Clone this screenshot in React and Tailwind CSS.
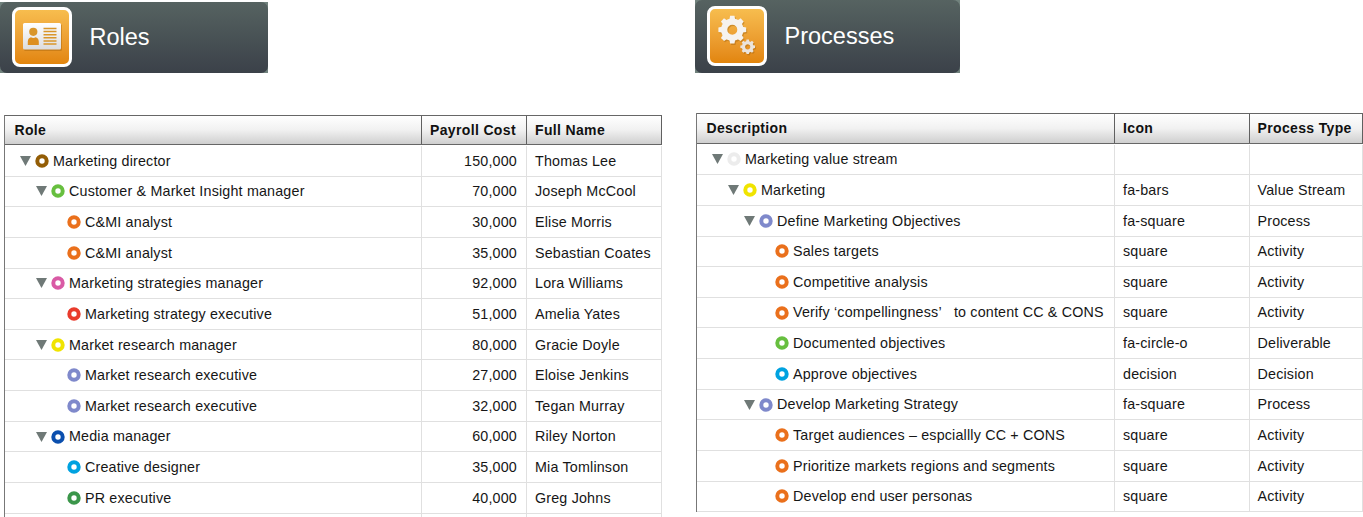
const roles = [
  [0, true, "#935d06", "Marketing director", "150,000", "Thomas Lee"],
  [1, true, "#67bf3f", "Customer & Market Insight manager", "70,000", "Joseph McCool"],
  [2, false, "#ea701c", "C&MI analyst", "30,000", "Elise Morris"],
  [2, false, "#ea701c", "C&MI analyst", "35,000", "Sebastian Coates"],
  [1, true, "#d95aa5", "Marketing strategies manager", "92,000", "Lora Williams"],
  [2, false, "#e93b2c", "Marketing strategy executive", "51,000", "Amelia Yates"],
  [1, true, "#f0e400", "Market research manager", "80,000", "Gracie Doyle"],
  [2, false, "#7f89cb", "Market research executive", "27,000", "Eloise Jenkins"],
  [2, false, "#7f89cb", "Market research executive", "32,000", "Tegan Murray"],
  [1, true, "#0b4fae", "Media manager", "60,000", "Riley Norton"],
  [2, false, "#00a2e0", "Creative designer", "35,000", "Mia Tomlinson"],
  [2, false, "#3b964a", "PR executive", "40,000", "Greg Johns"],
];

const verifyLabel = (
  <>
    Verify ‘compellingness<span className="tracking-[4px]">’</span>
    {"  to content CC & CONS"}
  </>
);

const processes = [
  [0, true, "#ececec", "Marketing value stream", "", ""],
  [1, true, "#f0e400", "Marketing", "fa-bars", "Value Stream"],
  [2, true, "#7f89cb", "Define Marketing Objectives", "fa-square", "Process"],
  [3, false, "#ea701c", "Sales targets", "square", "Activity"],
  [3, false, "#ea701c", "Competitive analysis", "square", "Activity"],
  [3, false, "#ea701c", verifyLabel, "square", "Activity"],
  [3, false, "#67bf3f", "Documented objectives", "fa-circle-o", "Deliverable"],
  [3, false, "#00a2e0", "Approve objectives", "decision", "Decision"],
  [2, true, "#7f89cb", "Develop Marketing Strategy", "fa-square", "Process"],
  [3, false, "#ea701c", "Target audiences – espciallly CC + CONS", "square", "Activity"],
  [3, false, "#ea701c", "Prioritize markets regions and segments", "square", "Activity"],
  [3, false, "#ea701c", "Develop end user personas", "square", "Activity"],
];

function RolesIcon() {
  return (
    <svg className="size-full" viewBox="0 0 60 60">
      <defs>
        <linearGradient id="card" x1="0" y1="0" x2="0" y2="1">
          <stop offset="0" stopColor="#ffffff" />
          <stop offset="1" stopColor="#dcdcdc" />
        </linearGradient>
      </defs>
      <rect x="12" y="17" width="38" height="27" rx="1.5" fill="#a9670c" opacity=".45" />
      <rect x="11" y="16" width="38" height="26.5" rx="1.5" fill="url(#card)" />
      <circle cx="21.3" cy="24.8" r="4.1" fill="#d9962a" />
      <path d="M15.800 38v-3.400c0-2.600 1.700-4 3.200-4.300 1.300 1 3.300 1 4.600 0 1.500.3 3.200 1.700 3.200 4.300V38z" fill="#dd8f1f" />
      <path d="M31.500 21.500h13M31.500 24.600h13M31.500 27.700h13M31.500 30.800h13M31.500 33.900h13M31.500 37h13" stroke="#d9962a" strokeWidth="1.500" />
    </svg>
  );
}

function Gear({ cx, cy, r, hole, tooth, fill }) {
  return (
    <g transform={`translate(${cx} ${cy})`} fill="none">
      <circle r={(r + hole) / 2} stroke={fill} strokeWidth={r - hole} />
      {[0, 45, 90, 135, 180, 225, 270, 315].map((a) => (
        <path
          key={a}
          transform={`rotate(${a})`}
          d={`M${-tooth} ${-r + 1}L${-tooth * 0.75} ${-r * 1.24}H${tooth * 0.75}L${tooth} ${-r + 1}z`}
          fill={fill}
        />
      ))}
    </g>
  );
}

function ProcessIcon() {
  return (
    <svg className="size-full" viewBox="0 0 60 60">
      <g opacity=".35">
        <Gear cx={26.300} cy={25} r={11.200} hole={5} tooth={2.900} fill="#8f560a" />
        <Gear cx={41.700} cy={42} r={5.900} hole={2.600} tooth={1.600} fill="#8f560a" />
      </g>
      <Gear cx={25.300} cy={23.700} r={11.200} hole={5} tooth={2.900} fill="#f6f3ef" />
      <Gear cx={40.700} cy={40.800} r={5.900} hole={2.600} tooth={1.600} fill="#ebe4dc" />
    </svg>
  );
}

function Banner({ title, className, iconClass, children }) {
  return (
    <div className={`bg-[#71827d] ${className}`}>
      <div className="flex h-full items-center rounded-[7px] bg-linear-to-b from-[#566361] to-[#3b4149] pl-3">
        <div className={`h-[60px] w-[60px] rounded-[8px] border-3 border-white bg-linear-to-b from-[#f7bd4e] to-[#e2850c] ${iconClass}`}>
          <div className="-m-[3px] h-[60px] w-[60px]">{children}</div>
        </div>
        <span className="pl-[17.500px] text-[23.500px] leading-none text-white">{title}</span>
      </div>
    </div>
  );
}

function TreeCell({ level, open, color, label }) {
  const indent = ["pl-[15px]", "pl-[31px]", "pl-[47px]", "pl-[63px]"][level];
  return (
    <div className={`flex items-center border-r border-[#e0e0e0] ${indent}`}>
      <svg className="mr-[4px] h-[10px] w-[11px] shrink-0" viewBox="0 0 11 10">
        {open && <path d="M0 0h11L5.500 10z" fill="#6f7977" />}
      </svg>
      <svg className="mr-[4px] size-[14px] shrink-0" viewBox="0 0 14 14">
        <circle cx="7" cy="7" r="4.700" fill="none" stroke={color} strokeWidth="4" />
      </svg>
      <span className="whitespace-pre">{label}</span>
    </div>
  );
}

const headCell = "flex items-center border-r border-[#606060] pb-px font-bold text-[#111] whitespace-nowrap";

function TreeTable({ heads, rows, columns, numeric, headClass, bodyClass, className }) {
  const cell = "flex items-center border-r border-[#e0e0e0] whitespace-nowrap pl-[8px]";
  return (
    <div className={`border-[#777] text-[14.300px] leading-none text-[#161616] ${className}`}>
      <div className={`grid border-t border-b border-[#666] bg-linear-to-b from-white via-[#f1f1f1] to-[#cfcfcf] text-[14px] tracking-[0.350px] ${headClass} ${columns}`}>
        <div className={`${headCell} pl-[9.500px]`}>{heads[0]}</div>
        <div className={`${headCell} pl-[8px]`}>{heads[1]}</div>
        <div className={`${headCell} pl-[8px]`}>{heads[2]}</div>
      </div>
      <div className={`tracking-[0.180px] ${bodyClass}`}>
        {rows.map(([level, open, color, label, second, third], i) => (
          <div key={i} className={`grid h-[30.650px] border-b border-[#e0e0e0] ${columns}`}>
            <TreeCell level={level} open={open} color={color} label={label} />
            <div className={numeric ? `${cell} justify-end pr-[9px]` : cell}>{second}</div>
            <div className={cell}>{third}</div>
          </div>
        ))}
      </div>
    </div>
  );
}

export default function App() {
  return (
    <main className="flex h-[517px] w-[1363px] overflow-hidden bg-white font-['Liberation_Sans',Arial,sans-serif]">
      <section className="w-[695px] shrink-0">
        <Banner title="Roles" className="mt-[2px] h-[71px] w-[268px]" iconClass="mb-[2px]">
          <RolesIcon />
        </Banner>
        <TreeTable
          heads={["Role", "Payroll Cost", "Full Name"]}
          rows={roles}
          columns="grid-cols-[417px_105px_135px]"
          numeric
          headClass="h-[30px]"
          bodyClass="pt-px"
          className="mt-[42px] ml-[4px] w-[658px] border-l"
        />
        <div className="ml-[4px] grid h-[4px] w-[658px] grid-cols-[417px_105px_135px] border-l border-[#777]">
          <div className="border-r border-[#e0e0e0]" />
          <div className="border-r border-[#e0e0e0]" />
          <div className="border-r border-[#e0e0e0]" />
        </div>
      </section>
      <section className="w-[668px] shrink-0">
        <Banner title="Processes" className="h-[73px] w-[265px]" iconClass="mb-px">
          <ProcessIcon />
        </Banner>
        <TreeTable
          heads={["Description", "Icon", "Process Type"]}
          rows={processes}
          columns="grid-cols-[418px_134.500px_113.500px]"
          headClass="h-[31px]"
          bodyClass="pt-[0.600px]"
          className="mt-[40px] ml-[1px] w-[667px] border-l"
        />
      </section>
    </main>
  );
}
